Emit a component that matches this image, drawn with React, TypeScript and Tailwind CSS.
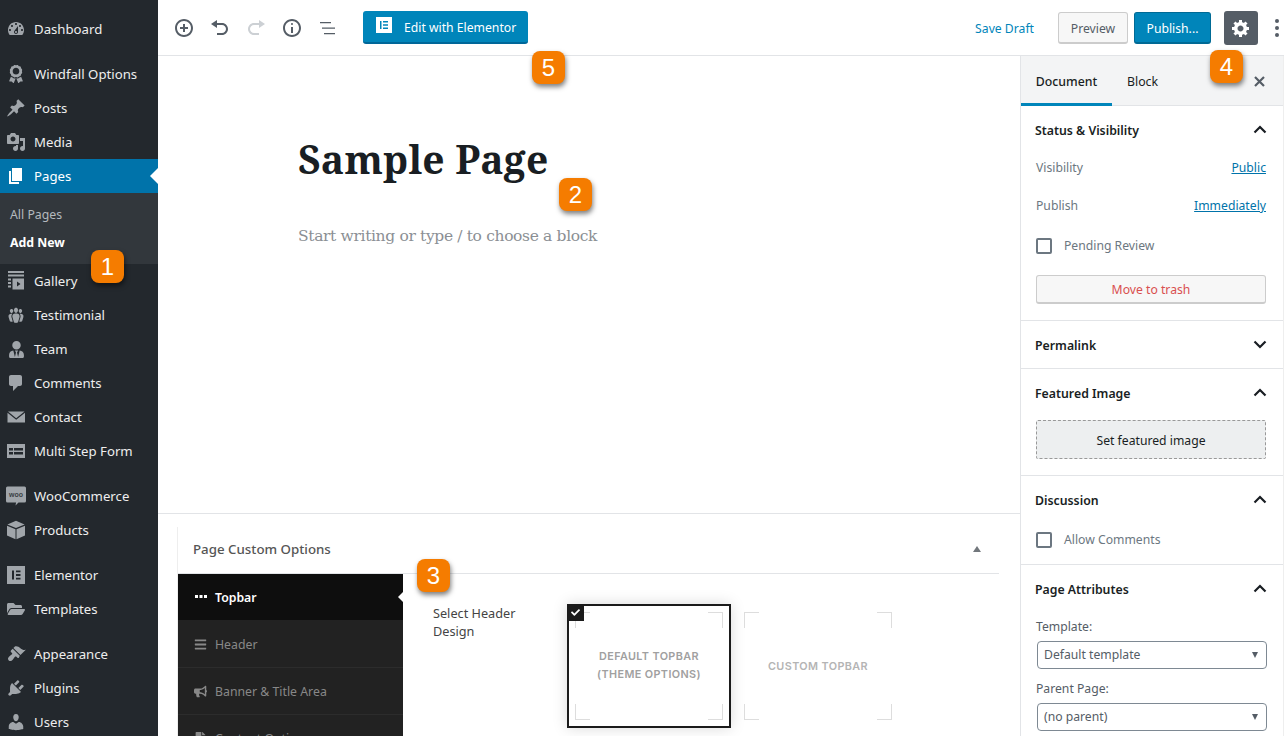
import React from "react";
import { FaAward, FaUserTie, FaFolderOpen, FaBullhorn, FaFile, FaCheck, FaBars } from "react-icons/fa";

const D = ({ d, size = 20, className = "" }: { d: string; size?: number; className?: string }) => (
  <svg width={size} height={size} viewBox="0 0 20 20" fill="currentColor" className={className}>
    <path d={d} />
  </svg>
);

const P = {
  dashboard: "M3.76 16h12.48c1.1-1.37 1.76-3.11 1.76-5 0-4.42-3.58-8-8-8s-8 3.58-8 8c0 1.89.66 3.63 1.76 5zM10 4c.55 0 1 .45 1 1s-.45 1-1 1-1-.45-1-1 .45-1 1-1zM6 6c.55 0 1 .45 1 1s-.45 1-1 1-1-.45-1-1 .45-1 1-1zm8 0c.55 0 1 .45 1 1s-.45 1-1 1-1-.45-1-1 .45-1 1-1zm-5.37 5.55L12 7v6c0 1.1-.9 2-2 2s-2-.9-2-2c0-.57.24-1.08.63-1.45zM4 10c.55 0 1 .45 1 1s-.45 1-1 1-1-.45-1-1 .45-1 1-1zm12 0c.55 0 1 .45 1 1s-.45 1-1 1-1-.45-1-1 .45-1 1-1zm-5 3c0-.55-.45-1-1-1s-1 .45-1 1 .45 1 1 1 1-.45 1-1z",
  pin: "M10.44 3.02l1.82-1.82 6.36 6.35-1.83 1.82c-1.05-.68-2.48-.57-3.41.36l-.75.75c-.92.93-1.04 2.35-.35 3.41l-1.83 1.82-2.41-2.41-2.8 2.79c-.42.42-3.38 2.71-3.8 2.29s1.86-3.39 2.28-3.81l2.79-2.79L4.1 9.36l1.83-1.82c1.05.69 2.48.57 3.4-.36l.75-.75c.93-.92 1.05-2.35.36-3.41z",
  media: "M13 11V4c0-.55-.45-1-1-1h-1.67L9 1H5L3.67 3H2c-.55 0-1 .45-1 1v7c0 .55.45 1 1 1h10c.55 0 1-.45 1-1zM7 4.5c1.38 0 2.5 1.12 2.5 2.5S8.38 9.5 7 9.5 4.5 8.38 4.5 7 5.62 4.5 7 4.5zM14 6h5v10.5c0 1.38-1.12 2.5-2.5 2.5S14 17.88 14 16.5s1.12-2.5 2.5-2.5c.17 0 .34.02.5.05V9h-3V6zm-4 8.05V13h2v3.5c0 1.38-1.12 2.5-2.5 2.5S7 17.88 7 16.5 8.12 14 9.5 14c.17 0 .34.02.5.05z",
  page: "M6 15V2h10v13H6zm-1 1h8v2H3V5h2v11z",
  comments: "M5 2h9c1.1 0 2 .9 2 2v7c0 1.1-.9 2-2 2h-2l-5 5v-5H5c-1.1 0-2-.9-2-2V4c0-1.1.9-2 2-2z",
  email: "M2 4.5h16.5L10.2 11.2 2 4.5zM1.5 5.8l8.7 7 8.8-7V15.5H1.5V5.8z",
  plugins: "M13.11 4.36L9.87 7.6 8 5.73l3.24-3.24c.35-.34 1.05-.2 1.56.32.52.51.66 1.21.31 1.55zm-8 1.77l.91-1.12 9.01 9.01-1.19.84c-.71.71-2.63 1.16-3.82 1.16H6.14L4.9 17.26c-.59.59-1.54.59-2.12 0-.59-.58-.59-1.53 0-2.12l1.24-1.24v-3.88c0-1.13.4-3.19 1.09-3.89zm7.26 3.97l3.24-3.24c.34-.35 1.04-.21 1.55.31.52.51.66 1.21.31 1.55l-3.24 3.25z",
  users: "M10 9.25c-2.27 0-2.73-3.44-2.73-3.44C7 4.02 7.82 2 9.97 2c2.16 0 2.98 2.02 2.71 3.81 0 0-.41 3.44-2.68 3.44zm0 2.57L12.72 10c2.39 0 4.52 2.33 4.52 4.53v2.49s-3.65 1.13-7.24 1.13c-3.65 0-7.24-1.13-7.24-1.13v-2.49c0-2.25 1.94-4.48 4.47-4.48z",
  groups: "M8.03 4.46c-.29 1.28.55 3.46 1.97 3.46 1.41 0 2.25-2.18 1.96-3.46-.22-.98-1.08-1.63-1.96-1.63-.89 0-1.74.65-1.97 1.63zm-4.13.9c-.25 1.08.47 2.93 1.67 2.93s1.92-1.85 1.67-2.93c-.19-.83-.92-1.39-1.67-1.39s-1.48.56-1.67 1.39zm8.86 0c-.25 1.08.47 2.93 1.66 2.93 1.2 0 1.92-1.85 1.67-2.93-.19-.83-.92-1.39-1.67-1.39-.74 0-1.47.56-1.66 1.39zm-.59 11.43l1.25-4.3C14.2 10 12.71 8.47 10 8.47c-2.72 0-4.21 1.53-3.44 4.02l1.26 4.3C8.05 17.51 9 18 10 18c.98 0 1.94-.49 2.17-1.21zm-6.1-7.63c-.49.67-.96 1.83-.42 3.59l1.12 3.79c-.34.2-.77.31-1.2.31-.85 0-1.65-.41-1.85-1.03l-1.07-3.65c-.65-2.11.61-3.4 2.92-3.4.27 0 .54.02.79.06-.1.1-.2.22-.29.33zm8.35-.39c2.31 0 3.58 1.29 2.92 3.4l-1.07 3.65c-.2.62-1 1.03-1.85 1.03-.43 0-.86-.11-1.2-.31l1.11-3.77c.55-1.78.08-2.94-.42-3.61-.08-.11-.18-.23-.28-.33.25-.04.51-.06.79-.06z",
  appearance: "M14.48 11.06L7.41 3.99l1.5-1.5c.5-.56 2.3-.47 3.51.32 1.21.8 1.43 1.28 2.91 2.1 1.18.64 2.45 1.26 4.45.85zm-.71.71L6.7 4.7 4.93 6.47c-.39.39-.39 1.02 0 1.41l1.06 1.06c.39.39.39 1.03 0 1.42-.6.6-1.43 1.11-2.21 1.69-.35.26-.7.53-1.01.84-.46.46-.84 1.24-.82 1.9.01.65.31 1.08.8 1.6.51.5 1.2.8 1.9.7.7-.1 1.3-.6 1.8-1.1.3-.3.6-.7.84-1.01.58-.78 1.09-1.61 1.69-2.21.39-.39 1.03-.39 1.42 0l1.06 1.06c.39.39 1.02.39 1.41 0z",
  insert: "M10 1c-5 0-9 4-9 9s4 9 9 9 9-4 9-9-4-9-9-9zm0 16c-3.9 0-7-3.1-7-7s3.1-7 7-7 7 3.1 7 7-3.1 7-7 7zm1-11H9v3H6v2h3v3h2v-3h3V9h-3V6z",
  undo: "M12 5H7V2L1 6l6 4V7h5c2.2 0 4 1.8 4 4s-1.8 4-4 4H7v2h5c3.3 0 6-2.7 6-6s-2.7-6-6-6z",
  redo: "M8 5h5V2l6 4-6 4V7H8c-2.2 0-4 1.8-4 4s1.8 4 4 4h5v2H8c-3.3 0-6-2.7-6-6s2.7-6 6-6z",
  info: "M9 15h2V9H9v6zm1-10c-.5 0-1 .5-1 1s.5 1 1 1 1-.5 1-1-.5-1-1-1zm0-4c-5 0-9 4-9 9s4 9 9 9 9-4 9-9-4-9-9-9zm0 16c-3.9 0-7-3.1-7-7s3.1-7 7-7 7 3.1 7 7-3.1 7-7 7z",
  gear: "M18 12h-2.18c-.17.7-.44 1.35-.81 1.93l1.54 1.54-2.1 2.1-1.54-1.54c-.58.36-1.23.63-1.91.79V19H8v-2.18c-.68-.16-1.33-.43-1.91-.79l-1.54 1.54-2.12-2.12 1.54-1.54c-.36-.58-.63-1.23-.79-1.91H1V9.03h2.17c.16-.7.44-1.35.8-1.94L2.43 5.55l2.1-2.1 1.54 1.54c.58-.37 1.24-.64 1.93-.81V2h3v2.18c.68.16 1.33.43 1.91.79l1.54-1.54 2.12 2.12-1.54 1.54c.36.59.64 1.24.8 1.94H18V12zm-8.5 1.5c1.66 0 3-1.34 3-3s-1.34-3-3-3-3 1.34-3 3 1.34 3 3 3z",
};

const GalleryIcon = () => (
  <svg width="20" height="20" viewBox="0 0 20 20" fill="currentColor">
    <rect x="2" y="0" width="16" height="2" />
    <rect x="2" y="3.5" width="16" height="2" />
    <path d="M2 7.5h3v2H2zM2 11h3v2H2zM2 14.5h3v2H2zM6.5 7.5H18v11H6.5zM11 10.5v5l3.5-2.5z" fillRule="evenodd" />
  </svg>
);
const FormIcon = () => (
  <svg width="20" height="20" viewBox="0 0 20 20" fill="currentColor">
    <path fillRule="evenodd" d="M1 3h18v14H1zM3 7v2.5h4V7zM8 7v2.5h9V7zM3 11v2.5h4V11zM8 11v2.5h9V11z" />
  </svg>
);
const WooIcon = () => (
  <svg width="20" height="20" viewBox="0 0 20 20">
    <path fill="currentColor" d="M1.500 .5h17a1.500 1.500 0 0 1 1.500 1.500v13a1.500 1.500 0 0 1-1.500 1.500h-6l-3 3 .6-3H1.500a1.500 1.500 0 0 1-1.500-1.500v-13A1.500 1.500 0 0 1 1.500 .5z" />
    <text x="10" y="11" textAnchor="middle" fontSize="7" fontFamily="Liberation Sans, sans-serif" fontWeight="700" fill="#3a3f44">woo</text>
  </svg>
);
const BoxIcon = () => (
  <svg width="20" height="20" viewBox="0 0 20 20" fill="currentColor">
    <path d="M10 .8l8.600 3.600-8.600 3.500-8.600-3.500zM1 5.700l8.500 3.500v10L1 15.500zM19 5.700l-8.500 3.500v10L19 15.500z" />
  </svg>
);
const ElIcon = () => (
  <svg width="20" height="20" viewBox="0 0 20 20">
    <path fill="currentColor" fillRule="evenodd" d="M1 1h18v18H1zM6 5.500v9h2v-9zM10 5.500v1.800h4.500V5.500zM10 9.100v1.800h4.500V9.100zM10 12.700v1.800h4.500v-1.800z" />
  </svg>
);

const sans = "font-['Noto_Sans','Open_Sans',sans-serif]";

type MI = { label: string; icon: React.ReactNode };
const ic = (d: string) => <D d={d} />;

const group1: MI[] = [
  { label: "Windfall Options", icon: <FaAward size={18} /> },
  { label: "Posts", icon: ic(P.pin) },
  { label: "Media", icon: ic(P.media) },
];
const group2: MI[] = [
  { label: "Gallery", icon: <GalleryIcon /> },
  { label: "Testimonial", icon: ic(P.groups) },
  { label: "Team", icon: <FaUserTie size={17} /> },
  { label: "Comments", icon: ic(P.comments) },
  { label: "Contact", icon: ic(P.email) },
  { label: "Multi Step Form", icon: <FormIcon /> },
];
const group3: MI[] = [
  { label: "WooCommerce", icon: <WooIcon /> },
  { label: "Products", icon: <BoxIcon /> },
];
const group4: MI[] = [
  { label: "Elementor", icon: <ElIcon /> },
  { label: "Templates", icon: <FaFolderOpen size={18} /> },
];
const group5: MI[] = [
  { label: "Appearance", icon: ic(P.appearance) },
  { label: "Plugins", icon: ic(P.plugins) },
  { label: "Users", icon: ic(P.users) },
];

const MenuRow = ({ label, icon }: MI) => (
  <div className="h-[34px] flex items-center pl-[6px] text-[#eeeeee] text-[13.2px]">
    <span className="w-[20px] h-[20px] flex items-center justify-center text-[#a0a5aa] shrink-0">{icon}</span>
    <span className="ml-[8px] pt-[2px] whitespace-nowrap">{label}</span>
  </div>
);

const Sidebar = () => (
  <aside className="w-[158px] shrink-0 bg-[#23282d] pt-[12px] h-full overflow-hidden">
    <MenuRow label="Dashboard" icon={ic(P.dashboard)} />
    <div className="h-[11px]" />
    {group1.map((m) => <MenuRow key={m.label} {...m} />)}
    <div className="relative h-[34px] flex items-center pl-[6px] bg-[#0073aa] text-white text-[13.2px]">
      <span className="w-[20px] h-[20px] flex items-center justify-center shrink-0"><D d={P.page} /></span>
      <span className="ml-[8px] pt-[2px]">Pages</span>
      <span className="absolute right-0 top-[9px] w-0 h-0 border-y-[8px] border-y-transparent border-r-[8px] border-r-white" />
    </div>
    <div className="h-[71px] bg-[#32373c] pt-[8px] pl-[10px] text-[12.3px]">
      <div className="h-[28px] flex items-center text-[#b4b9be]">All Pages</div>
      <div className="h-[28px] flex items-center text-white font-bold">Add New</div>
    </div>
    {group2.map((m) => <MenuRow key={m.label} {...m} />)}
    <div className="h-[11px]" />
    {group3.map((m) => <MenuRow key={m.label} {...m} />)}
    <div className="h-[11px]" />
    {group4.map((m) => <MenuRow key={m.label} {...m} />)}
    <div className="h-[11px]" />
    {group5.map((m) => <MenuRow key={m.label} {...m} />)}
  </aside>
);

const Badge = ({ n, className }: { n: string; className: string }) => (
  <div className={`absolute z-20 w-[33px] h-[33px] rounded-[8px] bg-[#f57c00] text-white text-[24px] leading-[33px] text-center font-['Liberation_Sans',sans-serif] shadow-[1px_3px_5px_rgba(0,0,0,0.5)] ${className}`}>{n}</div>
);

const Toolbar = () => (
  <header className="h-[56px] shrink-0 border-b border-[#e2e4e7] flex items-center bg-white text-[#555d66]">
    <div className="flex items-center pl-[16px] gap-[16px]">
      <D d={P.insert} size={20} />
      <D d={P.undo} size={20} />
      <D d={P.redo} size={20} className="text-[#ccd0d4]" />
      <D d={P.info} size={20} />
      <svg width="20" height="20" viewBox="0 0 20 20" fill="currentColor">
        <path d="M2 4h11v1.300H2zM4 9.500h13v1.300H4zM6 15h11v1.300H6z" />
      </svg>
    </div>
    <button className="ml-[25px] w-[165px] h-[33px] rounded-[3px] bg-[#0085ba] border-b-2 border-[#006799] text-white text-[12.2px] flex items-center pl-[13px]">
      <span className="w-[16px] h-[16px] bg-white flex items-center justify-center mr-[12px] mb-[3px]">
        <svg width="10" height="10" viewBox="0 0 10 10" fill="#0085ba"><path d="M1 1h1.500v8H1zM4 1h5v1.500H4zM4 4.200h5v1.500H4zM4 7.500h5v1.500H4z" /></svg>
      </span>
      <span className="pt-[4px]">Edit with Elementor</span>
    </button>
    <div className="ml-auto flex items-center text-[12.2px]">
      <span className="text-[#0085ba] mr-[24px] pt-[4px]">Save Draft</span>
      <button className="w-[70px] h-[32px] pt-[4px] rounded-[3px] bg-[#f7f7f7] border border-[#cccccc] border-b-2 text-[#555d66] mr-[6px]">Preview</button>
      <button className="w-[77px] h-[32px] pt-[4px] rounded-[3px] bg-[#0085ba] border border-[#006a95] border-b-2 text-white mr-[13px]">Publish...</button>
      <div className="w-[34px] h-[34px] rounded-[3px] bg-[#555d66] text-white flex items-center justify-center mr-[17px]"><D d={P.gear} size={20} /></div>
      <div className="w-[4px] flex flex-col gap-[3px] mr-[5px]">
        <span className="w-[4px] h-[4px] rounded-full bg-[#555d66]" />
        <span className="w-[4px] h-[4px] rounded-full bg-[#555d66]" />
        <span className="w-[4px] h-[4px] rounded-full bg-[#555d66]" />
      </div>
    </div>
  </header>
);

const Corners = ({ o }: { o: "six" | "eight" }) => {
  const l = o === "six" ? "left-[6px]" : "left-[8px]";
  const r = o === "six" ? "right-[6px]" : "right-[8px]";
  const t = o === "six" ? "top-[6px]" : "top-[8px]";
  const b = o === "six" ? "bottom-[6px]" : "bottom-[8px]";
  return (
    <>
      <span className={`absolute ${l} ${t} w-[15px] h-[16px] border-l border-t border-[#dddddd]`} />
      <span className={`absolute ${r} ${t} w-[15px] h-[16px] border-r border-t border-[#dddddd]`} />
      <span className={`absolute ${l} ${b} w-[15px] h-[16px] border-l border-b border-[#dddddd]`} />
      <span className={`absolute ${r} ${b} w-[15px] h-[16px] border-r border-b border-[#dddddd]`} />
    </>
  );
};

const NavRow = ({ icon, label, active }: { icon: React.ReactNode; label: string; active?: boolean }) => (
  <div className={`relative h-[47px] flex items-center pl-[16px] border-b text-[12.3px] ${active ? "bg-[#0e0e0e] text-white border-[#222222]" : "bg-[#222222] text-[#888888] border-[#2c2c2c]"}`}>
    <span className={`w-[13px] flex justify-center mr-[8px] ${active ? "text-white" : "text-[#888888]"}`}>{icon}</span>
    <span className={`pt-[2px] ${active ? "font-semibold" : ""}`}>{label}</span>
    {active && <span className="absolute right-0 top-[18px] w-0 h-0 border-y-[5px] border-y-transparent border-r-[5px] border-r-white" />}
  </div>
);

const Editor = () => (
  <main className="flex-1 min-w-0 flex flex-col bg-white">
    <div className="h-[458px] shrink-0 border-b border-[#e2e4e7] pl-[140px] pt-[77px]">
      <h1 className="font-['Noto_Serif','DejaVu_Serif',serif] font-bold text-[#191e23] text-[39px] leading-[52px] tracking-[0.2px]">Sample Page</h1>
      <p className="mt-[39px] font-['DejaVu_Serif',serif] text-[#8b8f94] text-[15.5px] leading-[24px] tracking-[-0.35px]">Start writing or type / to choose a block</p>
    </div>
    <div className="flex-1 min-h-0 pl-[19px] pr-[21px] pt-[13px] overflow-hidden">
      <div className="border-l border-[#eeeeee] h-full">
        <div className="h-[47px] border-b border-[#e2e4e7] flex items-center justify-between pl-[15px] pr-[18px] text-[13.3px] text-[#555555] font-medium">
          <span>Page Custom Options</span>
          <span className="w-0 h-0 border-x-[4px] border-x-transparent border-b-[6px] border-b-[#72777c] -mt-[2px]" />
        </div>
        <div className="flex">
          <div className="w-[225px] shrink-0">
            <NavRow active label="Topbar" icon={<svg width="12" height="4" viewBox="0 0 12 4" fill="currentColor"><path d="M0 0h3v3H0zM4.500 0h3v3h-3zM9 0h3v3H9z" /></svg>} />
            <NavRow label="Header" icon={<FaBars size={13} />} />
            <NavRow label="Banner &amp; Title Area" icon={<FaBullhorn size={13} />} />
            <NavRow label="Content Options" icon={<FaFile size={13} />} />
          </div>
          <div className="flex-1 flex pt-[30px] pl-[30px]">
            <div className="w-[134px] shrink-0 text-[12.7px] leading-[18px] text-[#444444]">Select Header<br />Design</div>
            <div className="relative w-[164px] h-[124px] border-[2px] border-[#1b1b1b] shadow-[0_0_14px_rgba(0,0,0,0.15)] flex items-center justify-center text-center text-[10.8px] leading-[18px] font-semibold text-[#a0a0a0] tracking-[0.4px] font-['Inter',sans-serif]">
              <Corners o="six" />
              <span className="absolute z-10 -left-[2px] -top-[2px] w-[17px] h-[17px] bg-[#1b1b1b] text-white flex items-center justify-center"><FaCheck size={9} /></span>
              <span>DEFAULT TOPBAR<br />(THEME OPTIONS)</span>
            </div>
            <div className="relative ml-[5px] w-[164px] h-[124px] flex items-center justify-center text-center text-[10.8px] font-semibold text-[#b4b4b4] tracking-[0.4px] font-['Inter',sans-serif]">
              <Corners o="eight" />
              <span className="pt-[2px]">CUSTOM TOPBAR</span>
            </div>
          </div>
        </div>
      </div>
    </div>
  </main>
);

const Chevron = ({ up }: { up?: boolean }) => (
  <svg width="14" height="9" viewBox="0 0 14 9" fill="none" stroke="#191e23" strokeWidth="2.200">
    <path d={up ? "M1.500 7.500 7 2l5.500 5.500" : "M1.500 1.500 7 7l5.500-5.500"} />
  </svg>
);

const Check = ({ label }: { label: string }) => (
  <div className="flex items-center h-[16px] text-[#6c7781] text-[12.2px]">
    <span className="w-[16px] h-[16px] rounded-[2px] border-2 border-[#6c7781] mr-[12px] bg-white" />
    <span className="pt-[1px]">{label}</span>
  </div>
);

const SectionHead = ({ label, up }: { label: string; up?: boolean }) => (
  <div className="h-[47px] flex items-center justify-between pl-[14px] pr-[16px] text-[12.3px] font-semibold text-[#191e23]">
    <span className="pt-[4px]">{label}</span>
    <Chevron up={up} />
  </div>
);

const Select = ({ label }: { label: string }) => (
  <div className="ml-[1px] -mr-[1px] h-[28px] rounded-[4px] border border-[#7e8993] flex items-center justify-between pl-[6px] pr-[8px] text-[12.2px] text-[#555d66] bg-white">
    <span>{label}</span>
    <span className="w-0 h-0 border-x-[3.5px] border-x-transparent border-t-[6px] border-t-[#555d66]" />
  </div>
);

const Inspector = () => (
  <aside className="w-[264px] shrink-0 border-l border-r border-l-[#e2e4e7] border-r-[#eeeeee] bg-white">
    <div className="h-[50px] pt-[4px] bg-[#f3f4f5] border-b border-[#e2e4e7] flex items-center text-[12.3px] text-[#191e23] relative">
      <div className="relative w-[91px] h-full flex items-center justify-center font-medium">
        Document
        <span className="absolute left-0 right-0 bottom-[-1px] h-[3px] bg-[#0085ba]" />
      </div>
      <div className="ml-[15px]">Block</div>
      <svg className="absolute right-[18px] top-[20px]" width="11" height="11" viewBox="0 0 11 11" stroke="#555d66" strokeWidth="2.200"><path d="M1 1l9 9M10 1l-9 9" /></svg>
    </div>
    <section className="h-[215px] border-b border-[#e2e4e7]">
      <SectionHead label="Status & Visibility" up />
      <div className="pl-[15px] pr-[17px] text-[12.2px] text-[#6c7781]">
        <div className="flex justify-between h-[20px] items-center mt-[5px]"><span>Visibility</span><span className="text-[#0073aa] underline">Public</span></div>
        <div className="flex justify-between h-[20px] items-center mt-[18px]"><span>Publish</span><span className="text-[#0073aa] underline">Immediately</span></div>
        <div className="mt-[22px]"><Check label="Pending Review" /></div>
        <button className="mt-[21px] w-full h-[29px] pt-[2px] rounded-[3px] bg-[#f7f7f7] border border-[#cccccc] border-b-2 text-[#d94f4f]">Move to trash</button>
      </div>
    </section>
    <section className="h-[48px] border-b border-[#e2e4e7]"><SectionHead label="Permalink" /></section>
    <section className="h-[107px] border-b border-[#e2e4e7]">
      <SectionHead label="Featured Image" up />
      <div className="ml-[15px] mr-[17px] mt-[4px] h-[39px] pt-[3px] rounded-[2px] bg-[#edeff0] border border-dashed border-[#999999] flex items-center justify-center text-[12.2px] text-[#191e23]">Set featured image</div>
    </section>
    <section className="h-[89px] border-b border-[#e2e4e7]">
      <SectionHead label="Discussion" up />
      <div className="pl-[15px] mt-[9px]"><Check label="Allow Comments" /></div>
    </section>
    <section>
      <SectionHead label="Page Attributes" up />
      <div className="pl-[15px] pr-[17px] text-[12.2px] text-[#555d66]">
        <div className="h-[20px] mt-[5px] mb-[4px] flex items-center">Template:</div>
        <Select label="Default template" />
        <div className="h-[20px] mt-[10px] mb-[4px] flex items-center">Parent Page:</div>
        <Select label="(no parent)" />
      </div>
    </section>
  </aside>
);

export default function App() {
  return (
    <div className={`relative w-[1284px] h-[736px] overflow-hidden flex bg-white ${sans}`}>
      <Sidebar />
      <div className="flex-1 min-w-0 flex flex-col">
        <Toolbar />
        <div className="flex-1 min-h-0 flex">
          <Editor />
          <Inspector />
        </div>
      </div>
      <Badge n="1" className="left-[91px] top-[250px]" />
      <Badge n="2" className="left-[559px] top-[178px]" />
      <Badge n="3" className="left-[417px] top-[559px]" />
      <Badge n="4" className="left-[1210px] top-[50px]" />
      <Badge n="5" className="left-[532px] top-[51px]" />
    </div>
  );
}
